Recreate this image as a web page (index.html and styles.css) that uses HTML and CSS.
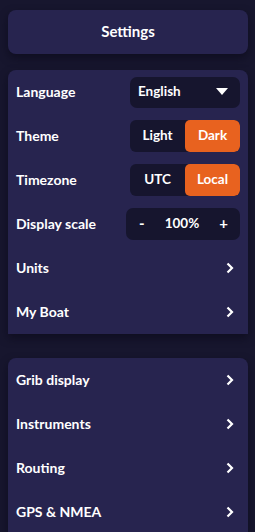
FILE: index.html
```html
<!DOCTYPE html>
<html>
<head>
<meta charset="utf-8">
<link rel="stylesheet" href="styles.css">
</head>
<body>
<div class="page">
  <div class="header">Settings</div>
  <div class="card card-square">
    <div class="row">
      <span class="label">Language</span>
      <div class="select"><span>English</span><svg class="tri" width="12" height="7" viewBox="0 0 12 7"><path d="M0 0H12L6 7Z" fill="#fff"/></svg></div>
    </div>
    <div class="row">
      <span class="label">Theme</span>
      <div class="seg"><span class="opt">Light</span><span class="opt on">Dark</span></div>
    </div>
    <div class="row">
      <span class="label">Timezone</span>
      <div class="seg"><span class="opt">UTC</span><span class="opt on">Local</span></div>
    </div>
    <div class="row">
      <span class="label">Display scale</span>
      <div class="scale"><span class="pm">-</span><span>100%</span><span class="pm">+</span></div>
    </div>
    <div class="row">
      <span class="label">Units</span>
      <svg class="chev" width="8" height="12" viewBox="0 0 8 12"><path d="M1.5 1.5L6 6L1.5 10.5" fill="none" stroke="#fff" stroke-width="2.2"/></svg>
    </div>
    <div class="row">
      <span class="label">My Boat</span>
      <svg class="chev" width="8" height="12" viewBox="0 0 8 12"><path d="M1.5 1.5L6 6L1.5 10.5" fill="none" stroke="#fff" stroke-width="2.2"/></svg>
    </div>
  </div>
  <div class="card card-open">
    <div class="row">
      <span class="label">Grib display</span>
      <svg class="chev" width="8" height="12" viewBox="0 0 8 12"><path d="M1.5 1.5L6 6L1.5 10.5" fill="none" stroke="#fff" stroke-width="2.2"/></svg>
    </div>
    <div class="row">
      <span class="label">Instruments</span>
      <svg class="chev" width="8" height="12" viewBox="0 0 8 12"><path d="M1.5 1.5L6 6L1.5 10.5" fill="none" stroke="#fff" stroke-width="2.2"/></svg>
    </div>
    <div class="row">
      <span class="label">Routing</span>
      <svg class="chev" width="8" height="12" viewBox="0 0 8 12"><path d="M1.5 1.5L6 6L1.5 10.5" fill="none" stroke="#fff" stroke-width="2.2"/></svg>
    </div>
    <div class="row">
      <span class="label">GPS &amp; NMEA</span>
      <svg class="chev" width="8" height="12" viewBox="0 0 8 12"><path d="M1.5 1.5L6 6L1.5 10.5" fill="none" stroke="#fff" stroke-width="2.2"/></svg>
    </div>
  </div>
</div>
</body>
</html>
```
FILE: styles.css
```css
html, body {
  margin: 0;
  padding: 0;
  background: #17162e;
  height: 100%;
  overflow: hidden;
}
body {
  font-family: Lato, "Noto Sans", sans-serif;
  font-weight: 700;
  color: #fff;
  font-size: 13.5px;
}
.page {
  padding: 10px 7px 0 8px;
  display: flex;
  flex-direction: column;
}
.header {
  height: 44px;
  background: #27244f;
  border-radius: 8px;
  display: flex;
  align-items: center;
  justify-content: center;
  font-size: 15px;
  padding-bottom: 2px;
  box-sizing: border-box;
  box-shadow: 0 4px 8px rgba(8, 6, 20, 0.5);
}
.card {
  background: #27244f;
  margin-top: 16px;
  box-shadow: 0 4px 8px rgba(8, 6, 20, 0.5);
}
.card-square {
  border-radius: 8px 8px 0 0;
}
.card-open {
  margin-top: 24px;
  border-radius: 8px 8px 0 0;
}
.row {
  height: 44px;
  display: flex;
  align-items: center;
  justify-content: space-between;
  padding: 0 14px 0 8px;
}
.row .select, .row .seg, .row .scale {
  margin-right: -6px;
}
.label {
  font-size: 14px;
  padding-bottom: 2px;
}
.select {
  width: 110px;
  height: 31px;
  box-sizing: border-box;
  background: #16152e;
  border-radius: 7px;
  display: flex;
  align-items: center;
  justify-content: space-between;
  padding: 0 12px 2px 8px;
}
.seg {
  width: 110px;
  height: 32px;
  background: #16152e;
  border-radius: 6px;
  display: flex;
  overflow: hidden;
}
.opt {
  flex: 1;
  display: flex;
  align-items: center;
  justify-content: center;
  padding-bottom: 2px;
}
.opt.on {
  background: #e8621f;
  border-radius: 5px;
}
.scale {
  width: 114px;
  height: 32px;
  box-sizing: border-box;
  background: #16152e;
  border-radius: 7px;
  display: flex;
  align-items: center;
  justify-content: space-between;
  padding: 0 12px 2px 13px;
}
.pm {
  font-size: 15px;
}
.chev {
  display: block;
}
```
